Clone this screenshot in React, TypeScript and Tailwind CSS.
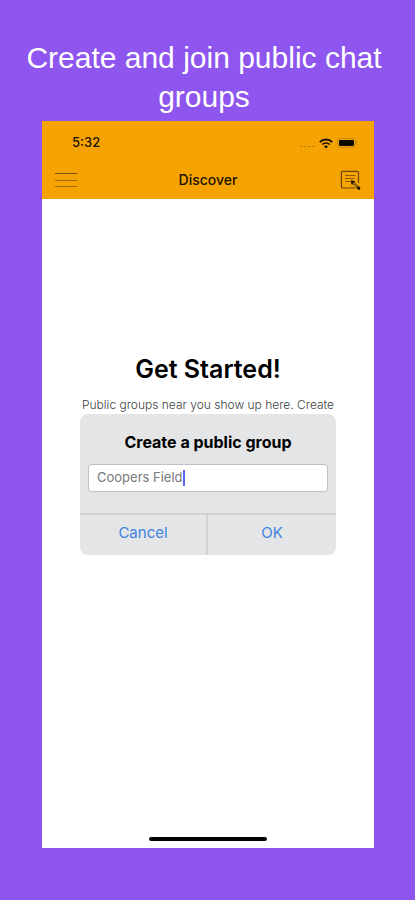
import { useState } from "react";

const MenuIcon = () => {
  return (
    <svg width="22" height="16" viewBox="0 0 22 16" fill="none" strokeWidth="1">
      <path d="M0 1.500h22" stroke="#7a5209" />
      <path d="M0 8.500h22M0 14.500h22" stroke="#a06c08" />
    </svg>
  )
}

const NoteIcon = () => {
  return (
    <svg width="21" height="21" viewBox="0 0 21 21" fill="none">
      <path d="M18.500 13V2.500a1.200 1.200 0 0 0-1.200-1.200H2.600a1.200 1.200 0 0 0-1.200 1.200v14.300a1.200 1.200 0 0 0 1.200 1.200H15" stroke="#6b4807" strokeWidth="1.200" />
      <path d="M5 5.500h10.500M5 8.500h9.500M5 11.500h5" stroke="#8a5d08" />
      <path d="M11 11l3.800.400-.400 1.200 3.600 3.600-1.300 1.300-3.600-3.600-1.200.600z" fill="#a87108" stroke="#4a3205" strokeWidth=".7" strokeLinejoin="round" />
      <path d="M10.800 10.600l4 .700-3 2.800z" fill="#0d0901" />
      <path d="M16.200 18.300l2.800-2.200 1.500 2.200-1.200 2z" fill="#1a1202" />
    </svg>
  )
}

const WifiIcon = () => {
  return (
    <svg width="14" height="11" viewBox="0 0 14 11" fill="none" stroke="#1a1202">
      <path d="M.800 4A9 9 0 0 1 13.200 4" strokeWidth="1.900" />
      <path d="M3.200 6.500A5.600 5.600 0 0 1 10.800 6.500" strokeWidth="1.700" />
      <path d="M7 10.500L5 8.400a3 3 0 0 1 4 0z" fill="#1a1202" stroke="none" />
    </svg>
  )
}

const BatteryIcon = () => {
  return (
    <svg width="21" height="10" viewBox="0 0 21 10" fill="none">
      <rect x=".5" y=".5" width="18" height="9" rx="2.500" stroke="#c98a06" />
      <rect x="2" y="2" width="15" height="6" rx="1" fill="#0d0901" />
      <path d="M19.700 3.500v3" stroke="#c98a06" />
    </svg>
  )
}

function TopBar(props: any) {
  return (
    <header className="bg-[#f5a303] text-[#1a1202]">
      <div className="flex h-10 items-center justify-between pl-[30px] pr-4 pt-1">
        <div className="text-[13px] font-medium">{props.time}</div>
        <div className="flex items-center gap-1">
          <svg width="15" height="9" viewBox="0 0 15 9" stroke="#b87c06" strokeWidth="1" strokeDasharray="2.500 1.500">
            <path d="M0 7.500h15" />
          </svg>
          <WifiIcon />
          <BatteryIcon />
        </div>
      </div>
      <div className="grid h-[38px] grid-cols-3 items-center px-[13px]">
        <button aria-label="Menu" className="justify-self-start"><MenuIcon /></button>
        <h2 className="text-center text-sm font-medium">{props.title}</h2>
        <button aria-label="New group" className="justify-self-end"><NoteIcon /></button>
      </div>
    </header>
  )
}

function GroupDialog() {
  const [name, setName] = useState("Coopers Field");

  return (
    <div className="absolute inset-0 flex items-center justify-center">
      <form role="dialog" aria-labelledby="dialogTitle" onSubmit={(e) => e.preventDefault()} className="w-[256px] overflow-hidden rounded-lg bg-[#e3e5e6]">
        <div className="px-2 pt-4 pb-[21px]">
          <h3 id="dialogTitle" className="text-center text-base leading-6 font-bold text-black">
            <label htmlFor="groupName">Create a public group</label>
          </h3>
          <div className="mt-[10px] flex h-7 items-center rounded border border-[#bfc1c3] bg-white px-2">
            <input id="groupName" type="text" value={name} onChange={(e) => setName(e.target.value)} className="max-w-full text-[13px] text-[#77797b] outline-none [field-sizing:content]" />
            <span className="h-4 w-[2px] shrink-0 bg-[#5a62ee]" />
          </div>
        </div>
        <div className="grid grid-cols-2 border-t-2 border-[#d0d2d4] text-[15px] text-[#3f84e0]">
          <button type="button" className="h-10 border-r-2 border-[#d0d2d4] pb-1">Cancel</button>
          <button type="submit" className="h-10 pb-1">OK</button>
        </div>
      </form>
    </div>
  )
}

function App() {
  return (
    <div className="flex min-h-screen flex-col bg-[#8e56ee] pr-[41px] pl-[42px] pt-[38px] pb-[52px] font-['Inter',sans-serif]">
      <h1 className="-mx-4 pr-2 pb-[5px] text-center font-['Liberation_Sans',sans-serif] text-[30px] leading-[39px] text-white">
        Create and join public chat groups
      </h1>
      <main className="relative flex grow flex-col bg-white">
        <TopBar time="5:32" title="Discover" />
        <section className="grow px-10 pt-[154px] text-center">
          <h2 className="text-[25px] leading-8 font-semibold text-black">Get Started!</h2>
          <p className="-mx-2 mt-3 text-[12px] leading-4 font-light whitespace-nowrap text-[#3c3e40]">Public groups near you show up here. Create</p>
        </section>
        <GroupDialog />
        <div className="mb-[7px] h-1 w-[118px] self-center rounded-full bg-black" />
      </main>
    </div>
  )
}

export default App;
